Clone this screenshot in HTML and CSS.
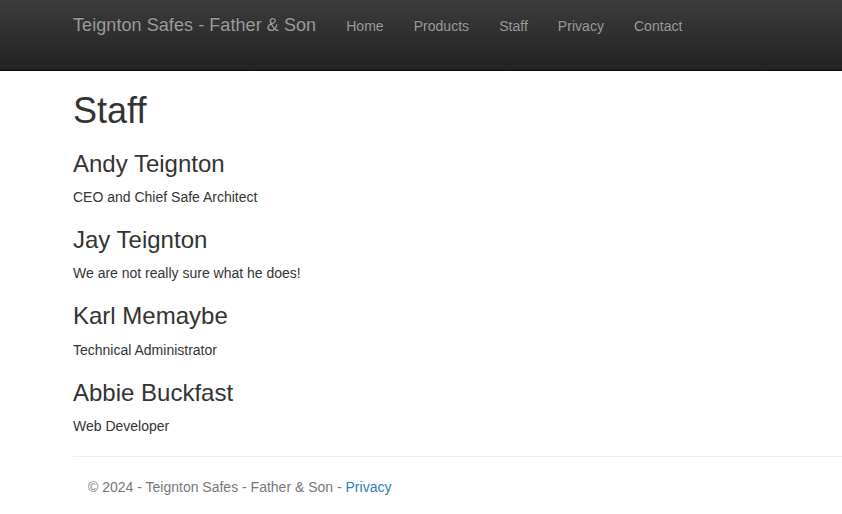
FILE: index.html
```html
<!DOCTYPE html>
<html lang="en">
<head>
<meta charset="utf-8">
<title>Staff - Teignton Safes</title>
<link rel="stylesheet" href="styles.css">
</head>
<body>
<header class="navbar">
  <div class="nav-inner">
    <a class="brand" href="#">Teignton Safes - Father &amp; Son</a>
    <ul class="nav">
      <li><a href="#">Home</a></li>
      <li><a href="#">Products</a></li>
      <li><a href="#">Staff</a></li>
      <li><a href="#">Privacy</a></li>
      <li><a href="#">Contact</a></li>
    </ul>
  </div>
</header>
<main class="content">
  <h1>Staff</h1>
  <h3>Andy Teignton</h3>
  <p>CEO and Chief Safe Architect</p>
  <h3>Jay Teignton</h3>
  <p>We are not really sure what he does!</p>
  <h3>Karl Memaybe</h3>
  <p>Technical Administrator</p>
  <h3>Abbie Buckfast</h3>
  <p>Web Developer</p>
  <hr class="rule">
  <footer class="footer">
    <p>&copy; 2024 - Teignton Safes - Father &amp; Son - <a href="#">Privacy</a></p>
  </footer>
</main>
</body>
</html>
```
FILE: styles.css
```css
* { box-sizing: border-box; }
html, body { margin: 0; padding: 0; }
body {
  font-family: "Liberation Sans", Arial, Helvetica, sans-serif;
  font-size: 14px;
  line-height: 20px;
  color: #333;
  background: #fff;
}
a { text-decoration: none; }
.navbar {
  height: 71px;
  background: linear-gradient(to bottom, #3c3c3c 0%, #222 100%);
  border-bottom: 1px solid #080808;
}
.nav-inner {
  display: flex;
  align-items: flex-start;
  padding-left: 58px;
}
.brand {
  display: block;
  padding: 15px 15px;
  height: 50px;
  font-size: 18px;
  line-height: 21px;
  letter-spacing: 0.07px;
  color: #9d9d9d;
  text-shadow: 0 -1px 0 rgba(0,0,0,.25);
}
.nav {
  display: flex;
  list-style: none;
  margin: 0;
  padding: 0;
}
.nav a {
  display: block;
  padding: 16px 15px 14px;
  line-height: 20px;
  letter-spacing: 0.03px;
  color: #9d9d9d;
  text-shadow: 0 -1px 0 rgba(0,0,0,.25);
}
.content {
  padding-left: 73px;
  padding-top: 1px;
  margin-top: -1px;
}
h1, h3 {
  font-family: inherit;
  font-weight: 500;
  line-height: 1.1;
  color: #333;
  margin: 20px 0 10px;
}
h1 { font-size: 36px; }
h3 { font-size: 24px; }
p { margin: 0 0 10px; }
.rule {
  margin: 20px 0;
  border: 0;
  border-top: 1px solid #eee;
}
.footer {
  padding-left: 15px;
  color: #777;
}
.footer a { color: #337ab7; }
```
